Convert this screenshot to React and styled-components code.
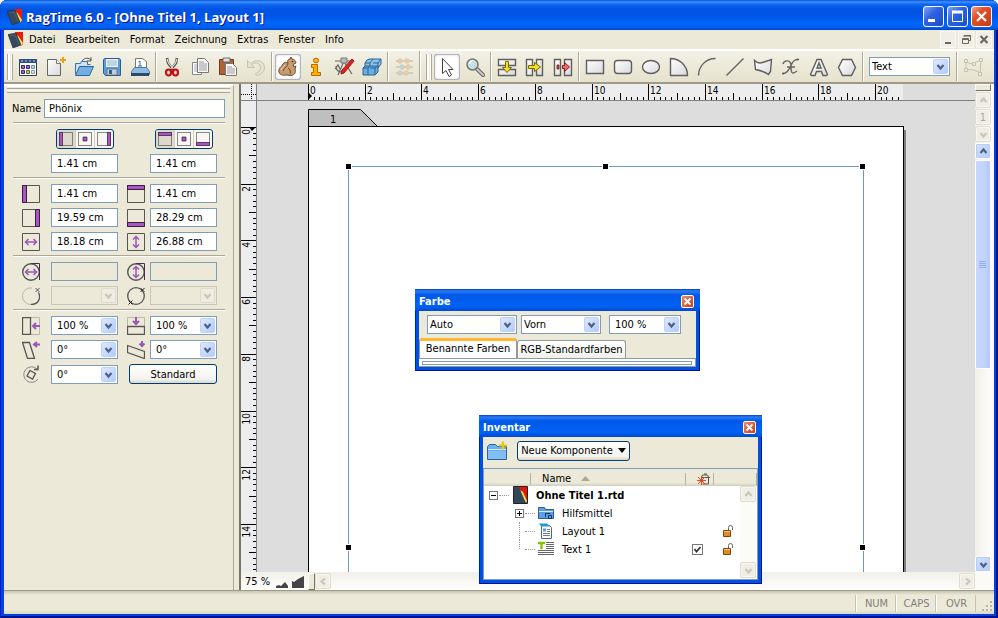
import React, { useState } from "react";
import styled, { createGlobalStyle, css } from "styled-components";

const CM = 28.35;

const GlobalStyle = createGlobalStyle`
  * {
    box-sizing: border-box;
  }

  body {
    margin: 0;
    background: #fff;
  }

  body, button, input, select {
    font-family: "DejaVu Sans Condensed", "DejaVu Sans", sans-serif;
    font-size: 11px;
    color: #000;
  }

  button {
    padding: 0;
    border: none;
    background: none;
  }

  svg {
    display: block;
    flex: none;
  }
`;

/* ---------- icons ---------- */

const LogoIcon = () => (
  <svg width="16" height="16" viewBox="0 0 16 16">
    <path d="M7 0h8v12l-2 2z" fill="#f01808" />
    <path d="M8 3l2 .5 5 7.500-1.500 2.500-3-3z" fill="#ffe866" />
    <path d="M0 2.500L8 1l5 12-8 3z" fill="#37495c" stroke="#1d2a38" strokeWidth=".6" />
    <path d="M2 4l5-1.200 4 10" fill="none" stroke="#57728a" strokeWidth=".6" />
  </svg>
);

const FileIcon = () => (
  <svg width="15" height="18" viewBox="0 0 15 18">
    <path d="M.5.5h14v17H.5z" fill="#33475a" stroke="#222" />
    <path d="M6 1h8v15z" fill="#e81408" />
    <path d="M7 4l3 2 4 9-1 2z" fill="#ffe24a" />
    <path d="M1 1h5l6 16H1z" fill="#33475a" />
  </svg>
);

const line = { fill: "none", stroke: "#666", strokeWidth: 1.4 };
const shape = { fill: "url(#shade)", stroke: "#5f5f5f", strokeWidth: 1.4 };

const toolIcons = {
  overview: (
    <>
      <path d="M4.500 5.500h17v16h-17z" fill="#fff" stroke="#2a3c5a" />
      <path d="M4 5h18v4H4z" fill="#2d4f86" />
      <path d="M6 7h2M10 7h2M14 7h2M18 7h2" stroke="#b8cdf0" />
      <path d="M6.500 11.500h3v3h-3zM11.500 11.500h3v3h-3z" fill="#9b6cf0" stroke="#3b1e78" />
      <path d="M16.500 11.500h3v3h-3z" fill="#bcd3ec" stroke="#6a8fb5" />
      <path d="M6.500 16.500h3v3h-3z" fill="#9b6cf0" stroke="#3b1e78" />
      <path d="M11.500 16.500h3v3h-3z" fill="#a2cc7a" stroke="#4d7530" />
      <path d="M16.500 16.500h3v3h-3z" fill="#ddd" stroke="#999" />
    </>
  ),
  newDoc: (
    <>
      <path d="M4.500 5.500h9l4 4v12h-13z" fill="url(#shade)" stroke="#666" />
      <path d="M13.500 5.500v4h4" fill="#fff" stroke="#777" />
      <path d="M20 3v6M17 6h6" stroke="#f5a000" strokeWidth="2" />
    </>
  ),
  open: (
    <>
      <path d="M4.500 20V9.500h5l1-2h6v3h3" fill="#cfe2f4" stroke="#3c73a8" />
      <path d="M4.500 21.500l4-9h14l-4 9z" fill="#73afe6" stroke="#2c659c" />
      <path d="M11 7c3-4 7-3 9-1M20 3v4h-4" fill="none" stroke="#555" />
    </>
  ),
  save: (
    <>
      <path d="M5.500 4.500h15l1 1v16h-15l-2-2v-14z" fill="#5b9bd9" stroke="#2d5c91" />
      <path d="M7 5h12v8H7z" fill="#eaf2fa" />
      <path d="M8 7h10M8 9h10M8 11h10" stroke="#9db4ca" />
      <path d="M8 15h10v6H8z" fill="#c4cbd2" stroke="#466" strokeWidth=".6" />
      <path d="M10 16h3v4h-3z" fill="#335f8e" />
    </>
  ),
  print: (
    <>
      <path d="M8.500 14.500v-10h7l4 3v7z" fill="#fff" stroke="#777" />
      <path d="M11.500 8l1.500-1v5M11 12h4" fill="none" stroke="#446fa6" />
      <path d="M4.500 17.500l3-4h12l3 4v3h-18z" fill="#8fbbe6" stroke="#4878a6" />
      <path d="M4 19h18v3H4z" fill="#2d4a68" />
    </>
  ),
  cut: (
    <>
      <path d="M8 4l1 5 6 8M18 4l-1 5-6 8" fill="none" stroke="#555" strokeWidth="2.600" />
      <path d="M8 5l1.500 4 5 6M18 5l-1.500 4-5 6" fill="none" stroke="#e4e4e4" strokeWidth="1.100" />
      <ellipse cx="9.500" cy="18.500" rx="2.500" ry="3" fill="none" stroke="#c80d12" strokeWidth="2.200" />
      <ellipse cx="16.500" cy="18.500" rx="2.500" ry="3" fill="none" stroke="#c80d12" strokeWidth="2.200" />
    </>
  ),
  copy: (
    <>
      <path d="M5.500 8.500h9v12h-9z" fill="#fff" stroke="#888" />
      <path d="M7 11h6M7 13h6M7 15h6M7 17h6" stroke="#aaa" />
      <path d="M10.500 4.500h7l4 4v10h-11z" fill="#f8f8f8" stroke="#777" />
      <path d="M12 8h5M12 10h8M12 12h8M12 14h8M12 16h8" stroke="#999" />
    </>
  ),
  paste: (
    <>
      <path d="M4.500 5.500h14v15h-14z" fill="#b2622f" stroke="#74381a" />
      <path d="M8 4h7v4H8z" fill="#ddd" stroke="#555" strokeWidth=".8" />
      <path d="M10.500 9.500h7l4 4v8h-11z" fill="#fafafa" stroke="#777" />
      <path d="M12 13h5M12 15h8M12 17h8M12 19h8" stroke="#999" />
    </>
  ),
  undo: (
    <path
      d="M4.500 6.500v7h7l-3-3c5-3 9-1 9 3s-3 5-5 6l1 2c5-1 8-4 8-8 0-7-9-9-14-4z"
      fill="#e6e3d3"
      stroke="#c6c3b4"
    />
  ),
  squirrel: (
    <>
      <path
        d="M11 21c-5 1-8-2-7-5 0-3 3-3 4-6 1-2 3-2 5-1-1-2 0-4 2-4l1-2 1 2c2 0 4 2 4 4l-3 1.500 1 2.500 2-1-1 3c1 3 0 6-4 6.500z"
        fill="#c79d70"
        stroke="#6e4b2e"
      />
      <path d="M13 9c0 4-4 4-5 8M15 20c1-3 0-5-2-6" fill="none" stroke="#6e4b2e" />
      <path d="M10 11c-2 2-3 3-4 5" fill="none" stroke="#e9cfae" />
      <circle cx="17.500" cy="7.500" r=".8" fill="#222" />
    </>
  ),
  info: (
    <>
      <ellipse cx="13" cy="6.500" rx="2.600" ry="2.300" fill="#ffb515" stroke="#b76c00" />
      <path d="M8.500 10.500h6v8h3v3h-9v-3h2v-5h-2z" fill="#ffb000" stroke="#b76c00" />
    </>
  ),
  drafting: (
    <>
      <path d="M4 7h17M13 7l-6 14M13 8l8 12M5 12c0 4 2 6 6 6M4 15l3-4 2 4" {...line} strokeWidth="1.200" />
      <path d="M10 4h6v5h-6z" fill="#bbb" stroke="#777" />
      <path d="M21 5l2 2-10 12-3 1 1-4z" fill="#dc2424" stroke="#a81616" />
    </>
  ),
  blocks: (
    <>
      <path d="M8 6l3-1h11v5l-3 4H6V9z" fill="#8cc4f0" stroke="#2d638f" />
      <path d="M6 9h5l3-4M11 9v4M14 9h5l3-4M19 9v4" fill="none" stroke="#2d638f" />
      <path d="M4 14l2-2h13v6l-3 3H4z" fill="#69aee6" stroke="#2d638f" />
      <path d="M4 14h5l2-2M9 14v7M11 14h5l3-2M16 14v7" fill="none" stroke="#2d638f" />
    </>
  ),
  sliders: (
    <>
      <path d="M5 7h17M5 13h17M5 19h17" stroke="#c9c5b4" strokeWidth="1.500" />
      <g stroke="#d5c8ae" strokeWidth=".8">
        <circle cx="9" cy="7" r="2.300" fill="#f3cd9b" />
        <circle cx="16" cy="7" r="2.300" fill="#f3cd9b" />
        <circle cx="17" cy="13" r="2.300" fill="#f0c9a4" />
        <circle cx="11" cy="13" r="2.300" fill="#bfd4dd" />
        <circle cx="9" cy="19" r="2.300" fill="#bfd4dd" />
        <circle cx="15" cy="19" r="2.300" fill="#f3cd9b" />
      </g>
    </>
  ),
  arrow: (
    <path d="M8.500 4.500v15l3.500-3 3 6 2.500-1.500-3-5.500h4.500z" fill="#fff" stroke="#444" />
  ),
  magnifier: (
    <>
      <path d="M15 15l6 6" stroke="#666" strokeWidth="4" strokeLinecap="round" />
      <path d="M15 15l6 6" stroke="#ccc" strokeWidth="2" strokeLinecap="round" />
      <circle cx="10.500" cy="10.500" r="5.500" fill="#c5dfe2" stroke="#777" strokeWidth="1.500" />
      <path d="M7.500 10a3 3 0 013-3" fill="none" stroke="#fff" strokeWidth="1.500" />
    </>
  ),
  flowDown: (
    <>
      <path d="M4.500 5.500h17v6h-17zM4.500 15.500h17v6h-17z" {...shape} />
      <path d="M11.500 7.500h3v6h3l-4.500 5-4.500-5h3z" fill="#f2df2a" stroke="#7a6e00" />
    </>
  ),
  flowRight: (
    <>
      <path d="M4.500 5.500h6v16h-6zM14.500 5.500h6v16h-6z" {...shape} />
      <path d="M6.500 11.500h6v-3l6 4.500-6 4.500v-3h-6z" fill="#f2df2a" stroke="#7a6e00" />
    </>
  ),
  flowBreak: (
    <>
      <path d="M4.500 5.500h6v16h-6zM14.500 5.500h7v16h-7z" {...shape} />
      <path d="M7 11h2v4H7z" fill="#e44" stroke="#711" strokeWidth=".8" />
      <path d="M12.500 11.500h2v-3l5 4.500-5 4.500v-3h-2z" fill="#f06a6a" stroke="#8d1a1a" />
    </>
  ),
  rect: <path d="M4.500 6.500h17v13h-17z" {...shape} />,
  roundRect: <rect x="4.500" y="6.500" width="17" height="13" rx="3" {...shape} />,
  oval: <ellipse cx="13" cy="13" rx="8.500" ry="6.500" {...shape} />,
  pie: <path d="M4.500 4.500c9 0 17 7 17 17h-17z" {...shape} />,
  arc: <path d="M4.500 21.500c0-9 7-17 17-17" {...line} />,
  straight: <path d="M4.500 21.500l17-17" {...line} />,
  polygon: <path d="M4.500 6.500c3 3 5 3 8 2l9-3-1 12-2 3c-4-3-8-4-13-5z" {...shape} />,
  curve: (
    <>
      <path d="M5 10c1-4 8-5 8 2s1 9 6 5M20 5.500c-6 0-6 5-8 8s-3 6-7 6M9 13h8" {...line} />
      <circle cx="20" cy="5.500" r="1" fill="#555" />
      <circle cx="5" cy="19.500" r="1" fill="#555" />
    </>
  ),
  textPath: (
    <path
      fillRule="evenodd"
      d="M11 5.500h4l6.500 15-1 1H17l-1.500-4h-5L9 21.500H5.500l-1-1zM13 9l-2 5h4z"
      {...shape}
    />
  ),
  hexagon: <path d="M8.500 5.500h9l4 8-4 8h-9l-4-8z" {...shape} />,
  editPoints: (
    <g stroke="#c4c1b2" fill="#ece9d8">
      <path d="M6 7c3 3 5 3 8 2l7-3-1 13c-4-3-9-4-14-3z" fill="none" />
      <path d="M4.500 5.500h3v3h-3zM19.500 4.500h3v3h-3zM12.500 8.500h3v3h-3zM4.500 14.500h3v3h-3zM18.500 18.500h3v3h-3z" />
    </g>
  ),
};

const ToolIcon = ({ name }) => (
  <svg width="26" height="26" viewBox="0 0 26 26">
    {toolIcons[name]}
  </svg>
);

const box = { fill: "none", stroke: "#555", strokeWidth: 1 };
const bar = { fill: "#a956c4", stroke: "#3a1e42", strokeWidth: 1 };
const mark = { fill: "none", stroke: "#9858b8", strokeWidth: 2 };

const fieldIcons = {
  left: (
    <>
      <path d="M.5.5h17v17H.5z" {...box} />
      <path d="M.5.5h4v17h-4z" {...bar} />
    </>
  ),
  right: (
    <>
      <path d="M.5.5h17v17H.5z" {...box} />
      <path d="M13.500.5h4v17h-4z" {...bar} />
    </>
  ),
  top: (
    <>
      <path d="M.5.5h17v17H.5z" {...box} />
      <path d="M.5.5h17v4H.5z" {...bar} />
    </>
  ),
  bottom: (
    <>
      <path d="M.5.5h17v17H.5z" {...box} />
      <path d="M.5 13.500h17v4H.5z" {...bar} />
    </>
  ),
  center: (
    <>
      <path d="M.5.5h17v17H.5z" {...box} />
      <path d="M6.500 6.500h5v5h-5z" {...bar} />
    </>
  ),
  width: (
    <>
      <path d="M.5.5h17v17H.5z" {...box} />
      <path d="M4 9h10M6.500 6L3.500 9l3 3M11.500 6l3 3-3 3" {...mark} strokeWidth="1.500" />
    </>
  ),
  height: (
    <>
      <path d="M.5.5h17v17H.5z" {...box} />
      <path d="M9 4v10M6 6.500l3-3 3 3M6 11.500l3 3 3-3" {...mark} strokeWidth="1.500" />
    </>
  ),
  radiusX: (
    <>
      <circle cx="9" cy="9" r="8.300" {...box} strokeWidth="1.400" />
      <path d="M9 .5h8.500V17" {...box} stroke="#4a2b58" />
      <path d="M4 9h10M6.500 6L3.500 9l3 3M11.500 6l3 3-3 3" {...mark} strokeWidth="1.500" />
    </>
  ),
  radiusY: (
    <>
      <circle cx="9" cy="9" r="8.300" {...box} strokeWidth="1.400" />
      <path d="M9 .5h8.500V17" {...box} stroke="#4a2b58" />
      <path d="M9 4v10M6 6.500l3-3 3 3M6 11.500l3 3 3-3" {...mark} strokeWidth="1.500" />
    </>
  ),
  arcStart: (
    <>
      <path d="M10 1a8.300 8.300 0 10-1 16.500" {...box} stroke="#b9b6a8" />
      <path d="M9 17.500c8 0 10-7 7.500-12" {...box} strokeWidth="1.300" />
      <path d="M13.500 1l4 4M17.500 1l-4 4" {...box} />
    </>
  ),
  arcEnd: (
    <>
      <circle cx="9" cy="9" r="8.300" {...box} strokeWidth="1.300" />
      <path d="M13.500 1l4 4M17.500 1l-4 4M1.500 13.500l4 4M5.500 13.500l-4 4" {...box} stroke="#222" />
    </>
  ),
  scaleX: (
    <>
      <path d="M9 .5h8.500v17H9" {...box} stroke="#bbb8a8" />
      <path d="M.5.5h8v17h-8z" {...box} strokeWidth="1.300" />
      <path d="M18 9h-6M14 6l-3 3 3 3" {...mark} />
    </>
  ),
  scaleY: (
    <>
      <path d="M.5 9V.5h17V9" {...box} stroke="#bbb8a8" />
      <path d="M.5 9.500h17v8H.5z" {...box} strokeWidth="1.300" />
      <path d="M9 0v6M6 4l3 3 3-3" {...mark} />
    </>
  ),
  shearX: (
    <>
      <path d="M.5 1.500h7l5 16h-7z" {...box} strokeWidth="1.300" />
      <path d="M18 3.500h-5M15 1l-3 2.500L15 6" {...mark} />
    </>
  ),
  shearY: (
    <>
      <path d="M.5 4.500l17 6v7l-17-6z" {...box} strokeWidth="1.300" />
      <path d="M15 0v4M12.500 2.500L15 5l2.500-2.500" {...mark} />
    </>
  ),
  rotate: (
    <>
      <path d="M15 4a7.800 7.800 0 101 10" {...box} stroke="#888" />
      <path d="M12 4.500h4v-4" {...box} strokeWidth="1.500" />
      <path d="M8 5.500l5.500 3-3 5.500L5 11z" {...box} strokeWidth="1.300" />
    </>
  ),
};

const FieldIcon = ({ name, size = 18 }) => (
  <svg width={size} height={size} viewBox="0 0 18 18">
    {fieldIcons[name]}
  </svg>
);

const chevrons = {
  up: "M2.500 7l3-3.500 3 3.500",
  down: "M2.500 4l3 3.500 3-3.500",
  left: "M7 2.500l-3.500 3 3.500 3",
  right: "M4 2.500l3.500 3-3.500 3",
};

const Chevron = ({ dir, color = "#4d6185" }) => (
  <svg width="11" height="11" viewBox="0 0 11 11">
    <path d={chevrons[dir]} fill="none" stroke={color} strokeWidth="2.200" />
  </svg>
);

const FolderIcon = ({ plus }) => (
  <svg width="22" height="20" viewBox="0 0 22 20">
    <path d="M.5 18.500V5.500l2-2h6l2 2h9v13z" fill="#6cb0ef" stroke="#28639e" />
    <path d="M1 8.500h18" stroke="#d3e8fb" />
    <path d="M1 10h18v8H1z" fill="#82bdf4" />
    {plus && <path d="M16 .5v8M12 4.500h8" stroke="#e8c800" strokeWidth="2.200" />}
  </svg>
);

const ToolFolderIcon = () => (
  <svg width="16" height="16" viewBox="0 0 16 16">
    <path d="M.5 13.500v-11h6l1 2h8v9z" fill="#5f9fe0" stroke="#2b5f99" />
    <path d="M1 6.500h14" stroke="#d3e8fb" />
    <path d="M7.500 12V8.500h5M10.500 10.500h3v3h-3z" fill="none" stroke="#16365a" />
  </svg>
);

const LayoutIcon = () => (
  <svg width="16" height="16" viewBox="0 0 16 16">
    <path d="M3.500 2.500h8l2 2v11h-10z" fill="#fff" stroke="#466a8a" />
    <path d="M1 .5h8l3 3H3z" fill="#1f9bd1" />
    <path d="M9 6.500h3M9 8.500h3M5 10.500h7M5 12.500h7" stroke="#778" />
    <path d="M5 5.500h3v3H5z" fill="#5e9ad6" />
  </svg>
);

const TextIcon = () => (
  <svg width="16" height="16" viewBox="0 0 16 16">
    <path d="M0 2h7M3.500 2v6" stroke="#86c400" strokeWidth="2.400" />
    <path d="M8 1.500h8M8 3.500h8M8 5.500h8M8 7.500h8M0 9.500h16M0 11.500h16M0 13.500h16" stroke="#666" />
  </svg>
);

const LockIcon = () => (
  <svg width="12" height="12" viewBox="0 0 12 12">
    <path d="M6.500 5V2.500a2 2 0 014 0V5" fill="none" stroke="#666" />
    <path d="M1.500 5.500h7v6h-7z" fill="#dd8a28" stroke="#7f4305" />
    <path d="M2 6.500h6" stroke="#ffc67a" />
  </svg>
);

const UsageIcon = () => (
  <svg width="13" height="12" viewBox="0 0 13 12">
    <path d="M4.500 4l1-2h5l1 2v7h-6M4 4.500h9M7 1h3" fill="none" stroke="#555" />
    <path d="M1 4l7 7M8 4l-7 7M0 7.500h9M4.500 3v9" stroke="#e8451c" />
  </svg>
);

/* ---------- shared controls ---------- */

const SelectBox = styled.div`
  position: relative;
  display: flex;
  width: ${({ $width }) => $width}px;

  svg {
    margin: auto;
  }
`;

const NativeSelect = styled.select`
  appearance: none;
  width: 100%;
  height: 19px;
  padding: 0 18px 0 ${({ $inset }) => $inset}px;
  border: 1px solid ${({ disabled }) => (disabled ? "#c9c7ba" : "#7f9db9")};
  border-radius: 0;
  background: ${({ disabled }) => (disabled ? "#ece9d8" : "#fff")};
  outline: none;
  opacity: 1;
`;

const SelectArrow = styled.span`
  position: absolute;
  top: 2px;
  right: 2px;
  display: flex;
  width: 15px;
  height: 15px;
  border-radius: 2px;
  background: ${({ $off }) =>
    $off ? "#efede1" : "linear-gradient(135deg, #dfe9fe, #b4cbf9)"};
  border: 1px solid ${({ $off }) => ($off ? "#dddacb" : "#bdd0f8")};
  pointer-events: none;
`;

const Select = ({ id, label, value, width = 67, inset = 2, disabled }) => (
  <SelectBox $width={width}>
    <NativeSelect id={id} aria-label={label} disabled={disabled} $inset={inset}>
      <option>{value}</option>
    </NativeSelect>
    <SelectArrow $off={disabled}>
      <Chevron dir="down" color={disabled ? "#c9c7ba" : undefined} />
    </SelectArrow>
  </SelectBox>
);

const TextField = styled.input`
  width: 67px;
  min-width: 0;
  height: 19px;
  padding: 0 5px;
  border: 1px solid #7f9db9;
  background: ${({ disabled }) => (disabled ? "#ece9d8" : "#fff")};
  outline: none;
`;

const PushButton = styled.button`
  display: flex;
  align-items: center;
  justify-content: center;
  gap: 5px;
  height: 20px;
  width: ${({ $width }) => $width}px;
  border: 1px solid #003c74;
  border-radius: 3px;
  background: linear-gradient(#fff, #f3f2ec 80%, #d9d4c8);
  white-space: nowrap;
`;

const ScrollButton = styled.button`
  display: flex;
  align-items: center;
  justify-content: center;
  flex: none;
  width: 16px;
  height: 16px;
  border: 1px solid ${({ $active }) => ($active ? "#fff" : "#e0ddcc")};
  border-radius: 2px;
  background: ${({ $active }) =>
    $active ? "linear-gradient(135deg, #d5e2fe, #b3cbfb)" : "#f0eee4"};
  box-shadow: inset 0 0 0 1px ${({ $active }) => ($active ? "#b7cbf5" : "#f7f6f0")};
  color: #a9a796;
`;

/* ---------- main window ---------- */

const Window = styled.div`
  position: relative;
  display: flex;
  flex-direction: column;
  height: 100vh;
  padding: 0 4px 4px;
  border-radius: 7px 7px 0 0;
  background: #0044dd;
  box-shadow: inset 1px 0 #0019cf, inset -2px 0 #00138c, inset 0 -2px #00138c;
  overflow: hidden;
`;

const TitleBar = styled.header`
  display: flex;
  align-items: center;
  flex: none;
  gap: 3px;
  height: 30px;
  margin: 0 -4px;
  padding: 3px 6px 0 7px;
  background: linear-gradient(
    #0a4fd8 0,
    #3c94ff 2px,
    #1169f2 4px,
    #0054e3 9px,
    #0055e5 16px,
    #0165fb 23px,
    #0062f5 27px,
    #0046c8 30px
  );

  h1 {
    flex: 1;
    margin: 0;
    font: bold 13px "Open Sans", "Noto Sans", sans-serif;
    color: #fff;
    text-shadow: 1px 1px #0f1089;
    white-space: nowrap;
  }
`;

const CaptionButton = styled.button`
  display: flex;
  width: 21px;
  height: 21px;
  border: 1px solid #fff;
  border-radius: 3px;
  background: ${({ $close }) =>
    $close
      ? "linear-gradient(135deg, #f0a088, #e2502d 35%, #c93a12)"
      : "linear-gradient(135deg, #7da5f5, #2f63e3 40%, #1a4cd0)"};
`;

const MenuBar = styled.nav`
  display: flex;
  align-items: center;
  flex: none;
  height: 21px;
  padding: 0 2px 0 4px;
  background: #ece9d8;
  border-bottom: 2px solid #fff;
`;

const MenuItems = styled.div`
  display: flex;
  flex: 1;
  gap: 10px;
  padding-left: 5px;
`;

const MdiButton = styled.button`
  display: flex;
  width: 16px;
  height: 17px;
  margin-left: 2px;
  border: 1px solid #f8f7f2;
  background: #f1efe5;
`;

const Toolbar = styled.div`
  display: flex;
  flex: none;
  height: 33px;
  background: linear-gradient(#f3f1e7, #ece9d8 50%, #e6e2cf);
  border-bottom: 2px solid #9d9a88;
`;

const Band = styled.div`
  display: flex;
  align-items: center;
  gap: 2px;
  padding: 0 3px;

  & + & {
    border-left: 1px solid #fff;
    box-shadow: -1px 0 #aca899;
    padding-left: 5px;
  }
`;

const Grip = styled.span`
  width: 6px;
  height: 26px;
  border: solid #aca899;
  border-width: 0 1px;
  background: linear-gradient(90deg, #fff 2px, #ece9d8 2px, #ece9d8 3px, #fff 3px);
`;

const Divider = styled.span`
  width: 2px;
  height: 29px;
  border-left: 1px solid #aca899;
  border-right: 1px solid #fff;
`;

const ToolButton = styled.button`
  width: 26px;
  height: 26px;
  border-radius: 3px;

  ${({ $pressed }) =>
    $pressed &&
    css`
      background: #fff;
      box-shadow: inset 0 0 0 1px #b2b4bf, inset 0 0 3px #999;
    `}
`;

const ToolSelect = styled.div`
  padding: 0 4px 0 3px;
`;

const Main = styled.main`
  display: flex;
  flex: 1;
  gap: 5px;
  min-height: 0;
  background: #ece9d8;
`;

const Sidebar = styled.aside`
  flex: none;
  width: 230px;
  padding: 0 8px 0 3px;
  border-right: 1px solid #aca899;
  border-top: 2px solid #fff;
`;

const SidebarGrip = styled.div`
  height: 8px;
  margin-right: -5px;
  background: linear-gradient(
    #fff 1px, #ece9d8 1px, #ece9d8 2px, #aca899 2px, #aca899 3px,
    #ece9d8 3px, #ece9d8 4px, #fff 4px, #fff 5px, #ece9d8 5px,
    #ece9d8 6px, #aca899 6px, #aca899 7px, #ece9d8 7px
  );
`;

const Section = styled.section`
  display: grid;
  row-gap: 5px;
  margin-left: 6px;
  padding: 5px 0 4px;

  & + & {
    border-top: 1px solid #aca899;
    box-shadow: inset 0 1px #fff;
    padding-top: 6px;
  }
`;

const NameRow = styled.div`
  display: flex;
  align-items: center;
  gap: 2px;
  margin-left: -1px;

  label {
    width: 30px;
  }

  input {
    flex: 1;
    padding: 0 4px;
  }
`;

const FieldRow = styled.div`
  display: grid;
  grid-template-columns: 29px 76px 23px 67px;
  align-items: center;
  padding-left: 9px;
`;

const AlignRow = styled.div`
  display: grid;
  grid-template-columns: 58px 58px;
  gap: 41px;
  padding-left: 43px;
`;

const ValueRow = styled.div`
  display: grid;
  grid-template-columns: 67px 67px;
  gap: 32px;
  padding-left: 38px;
`;

const Segmented = styled.div`
  display: flex;
  height: 20px;
  border: 1px solid #003c74;
  border-radius: 3px;
  background: #f7f6f1;
  overflow: hidden;
`;

const Segment = styled.button`
  display: flex;
  align-items: center;
  justify-content: center;
  flex: 1;
  background: ${({ $on }) => ($on ? "#dcd9cc" : "transparent")};

  & + & {
    border-left: 1px solid #d2cfc0;
  }
`;

const WideCell = styled.div`
  grid-column: 3 / 5;
  padding-left: 2px;
`;

/* ---------- document ---------- */

const Document = styled.section`
  display: grid;
  flex: 1;
  grid-template-columns: 16px minmax(0, 1fr) 16px;
  grid-template-rows: 17px minmax(0, 1fr) 18px;
  min-width: 0;
  padding-right: 3px;
  border-left: 2px solid #77756a;
  background: #fbfaf7;
`;

const RulerCorner = styled.div`
  border-right: 1px solid #808080;
  border-bottom: 1px solid #808080;
  background: #ededed;
`;

const TopRuler = styled.div`
  border-bottom: 1px solid #808080;
  background: #ddd;
  overflow: hidden;
`;

const SideRuler = styled.div`
  border-right: 1px solid #808080;
  background: #ededed;
  overflow: hidden;
`;

const RulerLabel = styled.text`
  font-size: 10px;
`;

const Canvas = styled.div`
  padding: 8px 0 0 51px;
  background: #ddd;
  overflow: hidden;
`;

const Page = styled.div`
  position: relative;
  width: 596px;
  height: 842px;
  border: 1px solid #000;
  background: #fff;
  box-shadow: 2px 4px #808080;
`;

const Frame = styled.div`
  position: absolute;
  top: 39px;
  left: 39px;
  width: 516px;
  height: 763px;
  border: 1px solid #669acb;
`;

const Handle = styled.span`
  position: absolute;
  top: ${({ $y }) => $y};
  left: ${({ $x }) => $x};
  width: 7px;
  height: 7px;
  margin: -4px;
  border: 1px solid #fff;
  background: #000;
`;

const VerticalScroll = styled.div`
  display: flex;
  flex-direction: column;
  grid-column: 3;
  grid-row: 1 / 3;
  gap: 1px;
  background: linear-gradient(90deg, #f0efe8, #fdfdfb);
`;

const Splitter = styled.span`
  flex: none;
  width: ${({ $tall }) => ($tall ? "7px" : "16px")};
  height: ${({ $tall }) => ($tall ? "17px" : "7px")};
  border: 1px solid;
  border-color: #fff #77756a #77756a #fff;
  background: #ece9d8;
`;

const Thumb = styled.div`
  display: flex;
  align-items: center;
  justify-content: center;
  height: 53%;
  border: 1px solid #fff;
  border-radius: 2px;
  background: linear-gradient(90deg, #c8d6fb, #c2d4fd 60%, #b4c8f6);
`;

const ScrollTrack = styled.div`
  flex: 1;
  min-height: 0;
`;

const BottomBar = styled.footer`
  display: flex;
  align-items: center;
  grid-column: 1 / 3;
  height: 18px;
  background: linear-gradient(#f1f0e9, #fefefd);
`;

const ZoomBox = styled.div`
  display: flex;
  align-items: center;
  width: 67px;
  padding: 0 3px 0 4px;
  white-space: nowrap;

  svg {
    margin-left: auto;
  }
`;

const StatusBar = styled.footer`
  display: flex;
  align-items: stretch;
  justify-content: flex-end;
  flex: none;
  height: 24px;
  padding: 4px 0 2px;
  border-top: 1px solid #9d9a88;
  background: linear-gradient(#c8c5b4, #ece9d8 4px, #ece9d8 19px, #dcd8c0);

  span {
    display: flex;
    align-items: center;
    justify-content: center;
    width: 40px;
    padding-left: 2px;
    border-left: 1px solid #c5c2b2;
    box-shadow: inset 1px 0 #fff;
    color: #808080;
  }
`;

const ResizeGrip = styled.svg`
  align-self: flex-end;
  margin: 0 1px 0 5px;
`;

const StatusEnd = styled.div`
  display: flex;
  border-left: 1px solid #c5c2b2;
`;

/* ---------- floating palettes ---------- */

const Palette = styled.section`
  position: absolute;
  top: ${({ $top }) => $top}px;
  left: ${({ $left }) => $left}px;
  width: ${({ $width }) => $width}px;
  padding: 0 4px 4px;
  background: #0050e4;
  box-shadow: inset 1px 0 #0019cf, inset -1px 0 #00138c, inset 0 -1px #00138c;
`;

const PaletteTitle = styled.header`
  display: flex;
  align-items: center;
  justify-content: space-between;
  height: 22px;
  margin: 0 -4px;
  padding: 2px 6px 0 4px;
  background: linear-gradient(#0842b8, #2a7cf6 2px, #0058e8 6px, #0162f6 17px, #004ad0);

  h2 {
    margin: 0;
    font-size: 11px;
    color: #fff;
  }

  button {
    display: flex;
    width: 13px;
    height: 13px;
    border: 1px solid #fff;
    border-radius: 2px;
    background: linear-gradient(135deg, #f0866a, #cf3c14);
  }
`;

const ColorSelects = styled.div`
  display: grid;
  grid-template-columns: 90px 80px 72px;
  column-gap: 4px;
  height: 26px;
  padding: 4px 8px 0;
  background: #ece9d8;

  & > :last-child {
    margin-left: 4px;
  }
`;

const Tabs = styled.div`
  display: flex;
  align-items: flex-end;
  height: 21px;
  background: #ece9d8;
`;

const Tab = styled.button`
  height: ${({ $active }) => ($active ? "20px" : "18px")};
  width: ${({ $active }) => ($active ? "98px" : "109px")};
  border: 1px solid #919b9c;
  border-bottom: none;
  border-radius: 3px 3px 0 0;
  background: linear-gradient(#fff, #f0f0ea);
  white-space: nowrap;

  ${({ $active }) =>
    $active &&
    css`
      padding-bottom: 3px;
      border-top: 3px solid #ffb52e;
      background: #fcfcfe;
    `}
`;

const TabPanel = styled.div`
  height: 9px;
  padding: 2px 3px;
  border: solid #919b9c;
  border-width: 1px 1px 1px 0;
  background: #fcfcfe;

  div {
    height: 4px;
    border: 1px solid #7f9db9;
    background: #fff;
  }
`;

const InventoryTools = styled.div`
  display: flex;
  align-items: center;
  gap: 8px;
  height: 31px;
  padding: 0 4px 4px;
  background: #ece9d8;
`;

const InventoryList = styled.div`
  position: relative;
  height: 112px;
  border: 1px solid #7f9db9;
  background: #fff;
`;

const InventoryTable = styled.table`
  width: 100%;
  table-layout: fixed;
  border-collapse: collapse;

  th {
    height: 17px;
    padding: 2px 0 0;
    font-weight: normal;
    background: linear-gradient(#ece9d8, #ece9d8 14px, #d0ccbc);
  }

  th > div {
    display: flex;
    align-items: center;
    gap: 10px;
    height: 12px;
    padding-left: 11px;
    border-right: 1px solid #b5b2a3;
  }

  td {
    height: 18px;
    padding: 0;
  }
`;

const TreeCell = styled.div`
  display: flex;
  align-items: center;
  height: 18px;
  padding-left: ${({ $level }) => ($level ? 31 : 5)}px;
  font-weight: ${({ $level }) => ($level ? "normal" : "bold")};
  white-space: nowrap;
`;

const Expander = styled.button`
  display: flex;
  width: 9px;
  height: 9px;
  border: 1px solid #777;
  background: #fff;
`;

const Stem = styled.span`
  width: 5px;
  height: ${({ $last }) => ($last ? "9px" : "18px")};
  margin-left: 4px;
  align-self: flex-start;
  border-left: 1px dotted #999;
`;

const Branch = styled.span`
  width: 10px;
  margin-left: 1px;
  border-top: 1px dotted #999;
`;

const NodeIcon = styled.span`
  display: flex;
  justify-content: center;
  width: 20px;
  margin: 0 6px 0 1px;
`;

const CheckCell = styled.div`
  display: grid;
  padding-left: 6px;

  input,
  svg {
    grid-area: 1 / 1;
  }

  svg {
    visibility: hidden;
    pointer-events: none;
  }

  input:checked + svg {
    visibility: visible;
  }
`;

const CheckBox = styled.input`
  appearance: none;
  width: 11px;
  height: 11px;
  margin: 0;
  border: 1px solid #777;
  background: #fff;
`;

const LockCell = styled.div`
  padding-left: 8px;
`;

const ListScroll = styled.div`
  position: absolute;
  top: 17px;
  right: 1px;
  bottom: 1px;
  display: flex;
  flex-direction: column;
  justify-content: space-between;
  background: #fbfbf8;
`;

/* ---------- data ---------- */

const menus = ["Datei", "Bearbeiten", "Format", "Zeichnung", "Extras", "Fenster", "Info"];

const bandOne = [
  ["overview", "Übersicht"],
  ["newDoc", "Neu"],
  ["open", "Öffnen"],
  ["save", "Sichern"],
  ["print", "Drucken"],
  null,
  ["cut", "Ausschneiden"],
  ["copy", "Kopieren"],
  ["paste", "Einsetzen"],
  ["undo", "Widerrufen"],
  null,
  ["squirrel", "Inventar"],
  ["info", "Information"],
  ["drafting", "Zeichenhilfen"],
  ["blocks", "Bausteine"],
  null,
  ["sliders", "Einstellungen"],
];

const bandTwo = [
  ["arrow", "Auswahl"],
  ["magnifier", "Lupe"],
  null,
  ["flowDown", "Teilen horizontal"],
  ["flowRight", "Teilen vertikal"],
  ["flowBreak", "Verbinden"],
  null,
  ["rect", "Rechteck"],
  ["roundRect", "Abgerundetes Rechteck"],
  ["oval", "Ellipse"],
  ["pie", "Sektor"],
  ["arc", "Bogen"],
  ["straight", "Linie"],
  ["polygon", "Polygon"],
  ["curve", "Kurve"],
  ["textPath", "Textpfad"],
  ["hexagon", "Sechseck"],
  null,
];

const positionFields = [
  [["left", "Links", "1.41 cm"], ["top", "Oben", "1.41 cm"]],
  [["right", "Rechts", "19.59 cm"], ["bottom", "Unten", "28.29 cm"]],
  [["width", "Breite", "18.18 cm"], ["height", "Höhe", "26.88 cm"]],
];

const transformFields = [
  [["scaleX", "Skalierung X", "100 %"], ["scaleY", "Skalierung Y", "100 %"]],
  [["shearX", "Scherung X", "0°"], ["shearY", "Scherung Y", "0°"]],
];

const alignments = [
  ["left", "center", "right"],
  ["top", "center", "bottom"],
];

const nodes = [
  { name: "Hilfsmittel", icon: <ToolFolderIcon />, open: true },
  { name: "Layout 1", icon: <LayoutIcon />, lock: true },
  { name: "Text 1", icon: <TextIcon />, lock: true, check: true, last: true },
];

const Field = ({ icon, label, value, disabled, type = "text" }) => (
  <>
    <label htmlFor={icon} aria-label={label}>
      <FieldIcon name={icon} />
    </label>
    {type === "text" ? (
      <TextField id={icon} defaultValue={value} disabled={disabled} />
    ) : (
      <Select id={icon} value={value} disabled={disabled} inset={5} />
    )}
  </>
);

const Tools = ({ items, pressed, onPress }) =>
  items.map((item, i) =>
    item ? (
      <ToolButton
        key={item[0]}
        aria-label={item[1]}
        $pressed={pressed === item[0]}
        onClick={() => onPress(item[0])}
      >
        <ToolIcon name={item[0]} />
      </ToolButton>
    ) : (
      <Divider key={i} />
    )
  );

// one tick each 2 mm, a longer one each cm, a full one with its number each 2 cm
const Ruler = ({ vertical, length, start }) => {
  const ticks = [];
  for (let i = 0; i <= length * 5; i++) {
    const at = Math.round(start + (i * CM) / 5) + 0.5;
    const size = i % 10 === 0 ? 16 : i % 5 === 0 ? 7 : 3;
    ticks.push(vertical ? `M${15 - size} ${at}H15` : `M${at} ${16 - size}V16`);
  }
  const labels = [];
  for (let cm = 0; cm <= length; cm += 2) {
    labels.push(cm);
  }
  return (
    <svg width={vertical ? 15 : start + 595} height={vertical ? start + length * CM : 16}>
      {!vertical && <path d={`M${start} 0h595v16h-595z`} fill="#ededed" />}
      <path d={ticks.join("")} stroke="#000" fill="none" />
      <path
        d={vertical ? `M8 ${start}h7l-4 4z` : `M${start} 8v8l4-4z`}
        fill="#000"
      />
      {labels.map((cm) => {
        const at = Math.round(start + cm * CM);
        return vertical ? (
          <RulerLabel
            key={cm}
            textAnchor="end"
            transform={`translate(9 ${at + 2}) rotate(-90)`}
          >
            {cm}
          </RulerLabel>
        ) : (
          <RulerLabel key={cm} x={at + 2} y="10">
            {cm}
          </RulerLabel>
        );
      })}
    </svg>
  );
};

const CloseButton = () => (
  <button aria-label="Schließen">
    <svg width="11" height="11" viewBox="0 0 11 11">
      <path d="M2.500 2.500l6 6M8.500 2.500l-6 6" stroke="#fff" strokeWidth="1.800" />
    </svg>
  </button>
);

const ColorPalette = () => {
  const [tab, setTab] = useState(0);

  return (
    <Palette $top={289} $left={415} $width={285}>
      <PaletteTitle>
        <h2>Farbe</h2>
        <CloseButton />
      </PaletteTitle>
      <ColorSelects>
        <Select label="Farbe" value="Auto" width={90} />
        <Select label="Ebene" value="Vorn" width={80} />
        <Select label="Deckkraft" value="100 %" width={72} inset={5} />
      </ColorSelects>
      <Tabs role="tablist">
        {["Benannte Farben", "RGB-Standardfarben"].map((name, i) => (
          <Tab
            key={name}
            role="tab"
            aria-selected={tab === i}
            $active={tab === i}
            onClick={() => setTab(i)}
          >
            {name}
          </Tab>
        ))}
      </Tabs>
      <TabPanel role="tabpanel">
        <div />
      </TabPanel>
    </Palette>
  );
};

const Inventory = () => (
  <Palette $top={415} $left={479} $width={283}>
    <PaletteTitle>
      <h2>Inventar</h2>
      <CloseButton />
    </PaletteTitle>
    <InventoryTools>
      <button aria-label="Neuer Ordner">
        <FolderIcon plus />
      </button>
      <PushButton $width={113}>
        Neue Komponente
        <svg width="8" height="5" viewBox="0 0 8 5">
          <path d="M0 0h8L4 5z" />
        </svg>
      </PushButton>
    </InventoryTools>
    <InventoryList>
      <InventoryTable>
        <colgroup>
          <col width="47" />
          <col />
          <col width="28" />
          <col width="43" />
        </colgroup>
        <thead>
          <tr>
            <th>
              <div />
            </th>
            <th>
              <div>
                Name
                <svg width="9" height="5" viewBox="0 0 9 5">
                  <path d="M0 5l4.500-5L9 5z" fill="#aca899" />
                </svg>
              </div>
            </th>
            <th>
              <div>
                <UsageIcon />
              </div>
            </th>
            <th>
              <div />
            </th>
          </tr>
        </thead>
        <tbody>
          <tr>
            <td colSpan="4">
              <TreeCell $level={0}>
                <Expander aria-label="Zuklappen">
                  <svg width="7" height="7">
                    <path d="M1 3.500h5" stroke="#000" />
                  </svg>
                </Expander>
                <Branch />
                <NodeIcon>
                  <FileIcon />
                </NodeIcon>
                Ohne Titel 1.rtd
              </TreeCell>
            </td>
          </tr>
          {nodes.map(({ name, icon, open, lock, check, last }) => (
            <tr key={name}>
              <td colSpan="2">
                <TreeCell $level={1}>
                  {open ? (
                    <Expander aria-label="Aufklappen">
                      <svg width="7" height="7">
                        <path d="M1 3.500h5M3.500 1v5" stroke="#000" />
                      </svg>
                    </Expander>
                  ) : (
                    <Stem $last={last} />
                  )}
                  <Branch />
                  <NodeIcon>{icon}</NodeIcon>
                  {name}
                </TreeCell>
              </td>
              <td>
                {check && (
                  <CheckCell>
                    <CheckBox type="checkbox" aria-label={name} defaultChecked />
                    <svg width="11" height="11" viewBox="0 0 11 11">
                      <path d="M2.500 5l2 2.500L8.500 3" fill="none" stroke="#333" strokeWidth="1.800" />
                    </svg>
                  </CheckCell>
                )}
              </td>
              <td>
                {lock && (
                  <LockCell>
                    <LockIcon />
                  </LockCell>
                )}
              </td>
            </tr>
          ))}
        </tbody>
      </InventoryTable>
      <ListScroll>
        <ScrollButton aria-label="Nach oben">
          <Chevron dir="up" color="#c9c7ba" />
        </ScrollButton>
        <ScrollButton aria-label="Nach unten">
          <Chevron dir="down" color="#c9c7ba" />
        </ScrollButton>
      </ListScroll>
    </InventoryList>
  </Palette>
);

const App = () => {
  const [view, setView] = useState("squirrel");
  const [tool, setTool] = useState("arrow");

  return (
    <Window>
      <GlobalStyle />
      <TitleBar>
        <LogoIcon />
        <h1>RagTime 6.0 - [Ohne Titel 1, Layout 1]</h1>
        <CaptionButton aria-label="Minimieren">
          <svg width="19" height="19">
            <path d="M4 13.500h7" stroke="#fff" strokeWidth="3" />
          </svg>
        </CaptionButton>
        <CaptionButton aria-label="Maximieren">
          <svg width="19" height="19">
            <path d="M4 5h11" stroke="#fff" strokeWidth="3" />
            <path d="M4.500 4.500h10v10h-10z" stroke="#fff" fill="none" />
          </svg>
        </CaptionButton>
        <CaptionButton $close aria-label="Schließen">
          <svg width="19" height="19">
            <path d="M5 5l9 9M14 5l-9 9" stroke="#fff" strokeWidth="2.200" />
          </svg>
        </CaptionButton>
      </TitleBar>

      <MenuBar>
        <LogoIcon />
        <MenuItems>
          {menus.map((menu) => (
            <button key={menu}>{menu}</button>
          ))}
        </MenuItems>
        <MdiButton aria-label="Dokument minimieren">
          <svg width="14" height="15">
            <path d="M4 11h6" stroke="#6b695e" strokeWidth="2" />
          </svg>
        </MdiButton>
        <MdiButton aria-label="Dokument wiederherstellen">
          <svg width="14" height="15">
            <path d="M5 5V3.500h6.500v5H10M3.500 6.500h6v5h-6zM3 7.500h7M5 4h7" stroke="#6b695e" fill="none" />
          </svg>
        </MdiButton>
        <MdiButton aria-label="Dokument schließen">
          <svg width="14" height="15">
            <path d="M3.500 4l7 7M10.500 4l-7 7" stroke="#6b695e" strokeWidth="2.200" />
          </svg>
        </MdiButton>
      </MenuBar>

      <Toolbar>
        <svg width="0" height="0">
          <linearGradient id="shade" x1="0" y1="0" x2="1" y2="1">
            <stop offset="0" stopColor="#fff" />
            <stop offset="1" stopColor="#d9d9dd" />
          </linearGradient>
        </svg>
        <Band>
          <Grip />
          <Tools items={bandOne} pressed={view} onPress={setView} />
        </Band>
        <Band>
          <Grip />
          <Tools items={bandTwo} pressed={tool} onPress={setTool} />
          <ToolSelect>
            <Select label="Inhalt" value="Text" width={81} />
          </ToolSelect>
          <Divider />
          <ToolButton aria-label="Punkte bearbeiten">
            <ToolIcon name="editPoints" />
          </ToolButton>
        </Band>
      </Toolbar>

      <Main>
        <Sidebar>
          <SidebarGrip />
          <Section>
            <NameRow>
              <label htmlFor="name">Name</label>
              <TextField id="name" defaultValue="Phönix" />
            </NameRow>
          </Section>
          <Section>
            <AlignRow>
              {alignments.map((group) => (
                <Segmented key={group[0]}>
                  {group.map((name, i) => (
                    <Segment key={name} $on={i === 0} aria-label={name}>
                      <FieldIcon name={name} size={14} />
                    </Segment>
                  ))}
                </Segmented>
              ))}
            </AlignRow>
            <ValueRow>
              <TextField aria-label="Abstand horizontal" defaultValue="1.41 cm" />
              <TextField aria-label="Abstand vertikal" defaultValue="1.41 cm" />
            </ValueRow>
          </Section>
          <Section>
            {positionFields.map((row) => (
              <FieldRow key={row[0][0]}>
                {row.map(([icon, label, value]) => (
                  <Field key={icon} icon={icon} label={label} value={value} />
                ))}
              </FieldRow>
            ))}
          </Section>
          <Section>
            <FieldRow>
              <Field icon="radiusX" label="Radius X" value="" disabled />
              <Field icon="radiusY" label="Radius Y" value="" disabled />
            </FieldRow>
            <FieldRow>
              <Field icon="arcStart" label="Anfangswinkel" value="" type="select" disabled />
              <Field icon="arcEnd" label="Endwinkel" value="" type="select" disabled />
            </FieldRow>
          </Section>
          <Section>
            {transformFields.map((row) => (
              <FieldRow key={row[0][0]}>
                {row.map(([icon, label, value]) => (
                  <Field key={icon} icon={icon} label={label} value={value} type="select" />
                ))}
              </FieldRow>
            ))}
            <FieldRow>
              <Field icon="rotate" label="Drehung" value="0°" type="select" />
              <WideCell>
                <PushButton $width={88}>Standard</PushButton>
              </WideCell>
            </FieldRow>
          </Section>
        </Sidebar>

        <Document>
          <RulerCorner>
            <svg width="15" height="16">
              <path d="M0 10.500h15M10.500 0v16" stroke="#000" strokeDasharray="1 1" />
            </svg>
          </RulerCorner>
          <TopRuler>
            <Ruler length={20.8} start={51} />
          </TopRuler>
          <VerticalScroll>
            <Splitter />
            <ScrollButton aria-label="Vorige Seite">
              <Chevron dir="up" color="#c9c7ba" />
            </ScrollButton>
            <ScrollButton aria-label="Seite">1</ScrollButton>
            <ScrollButton aria-label="Nächste Seite">
              <Chevron dir="down" color="#c9c7ba" />
            </ScrollButton>
            <ScrollButton $active aria-label="Nach oben">
              <Chevron dir="up" />
            </ScrollButton>
            <ScrollTrack>
              <Thumb>
                <svg width="8" height="9">
                  <path d="M0 1.500h7M0 3.500h7M0 5.500h7M0 7.500h7" stroke="#8cb0f8" />
                </svg>
              </Thumb>
            </ScrollTrack>
            <ScrollButton $active aria-label="Nach unten">
              <Chevron dir="down" />
            </ScrollButton>
          </VerticalScroll>
          <SideRuler>
            <Ruler vertical length={15.8} start={26} />
          </SideRuler>
          <Canvas>
            <svg width="71" height="17">
              <path d="M.5 17V.5h52L69 17" fill="#bfbfbf" stroke="#000" />
              <text x="22" y="14">
                1
              </text>
            </svg>
            <Page>
              <Frame>
                <Handle $x="0%" $y="0%" />
                <Handle $x="50%" $y="0%" />
                <Handle $x="100%" $y="0%" />
                <Handle $x="0%" $y="50%" />
                <Handle $x="100%" $y="50%" />
              </Frame>
            </Page>
          </Canvas>
          <BottomBar>
            <ZoomBox>
              75 %
              <svg width="30" height="13">
                <path d="M1 13v-2l3-1 2 1 4-4 3 4v2zM17 13V6l2 1 4-3 6-3v12z" fill="#444" />
              </svg>
            </ZoomBox>
            <Splitter $tall />
            <ScrollButton aria-label="Nach links">
              <Chevron dir="left" color="#c9c7ba" />
            </ScrollButton>
            <ScrollTrack />
            <ScrollButton aria-label="Nach rechts">
              <Chevron dir="right" color="#c9c7ba" />
            </ScrollButton>
          </BottomBar>
        </Document>
      </Main>

      <StatusBar>
        <span>NUM</span>
        <span>CAPS</span>
        <span>OVR</span>
        <StatusEnd>
          <ResizeGrip width="12" height="12">
            <path
              d="M9 1h2v2H9zM5 5h2v2H5zM9 5h2v2H9zM1 9h2v2H1zM5 9h2v2H5zM9 9h2v2H9z"
              fill="#b8b5a3"
            />
          </ResizeGrip>
        </StatusEnd>
      </StatusBar>

      <ColorPalette />
      <Inventory />
    </Window>
  );
};

export default App;
